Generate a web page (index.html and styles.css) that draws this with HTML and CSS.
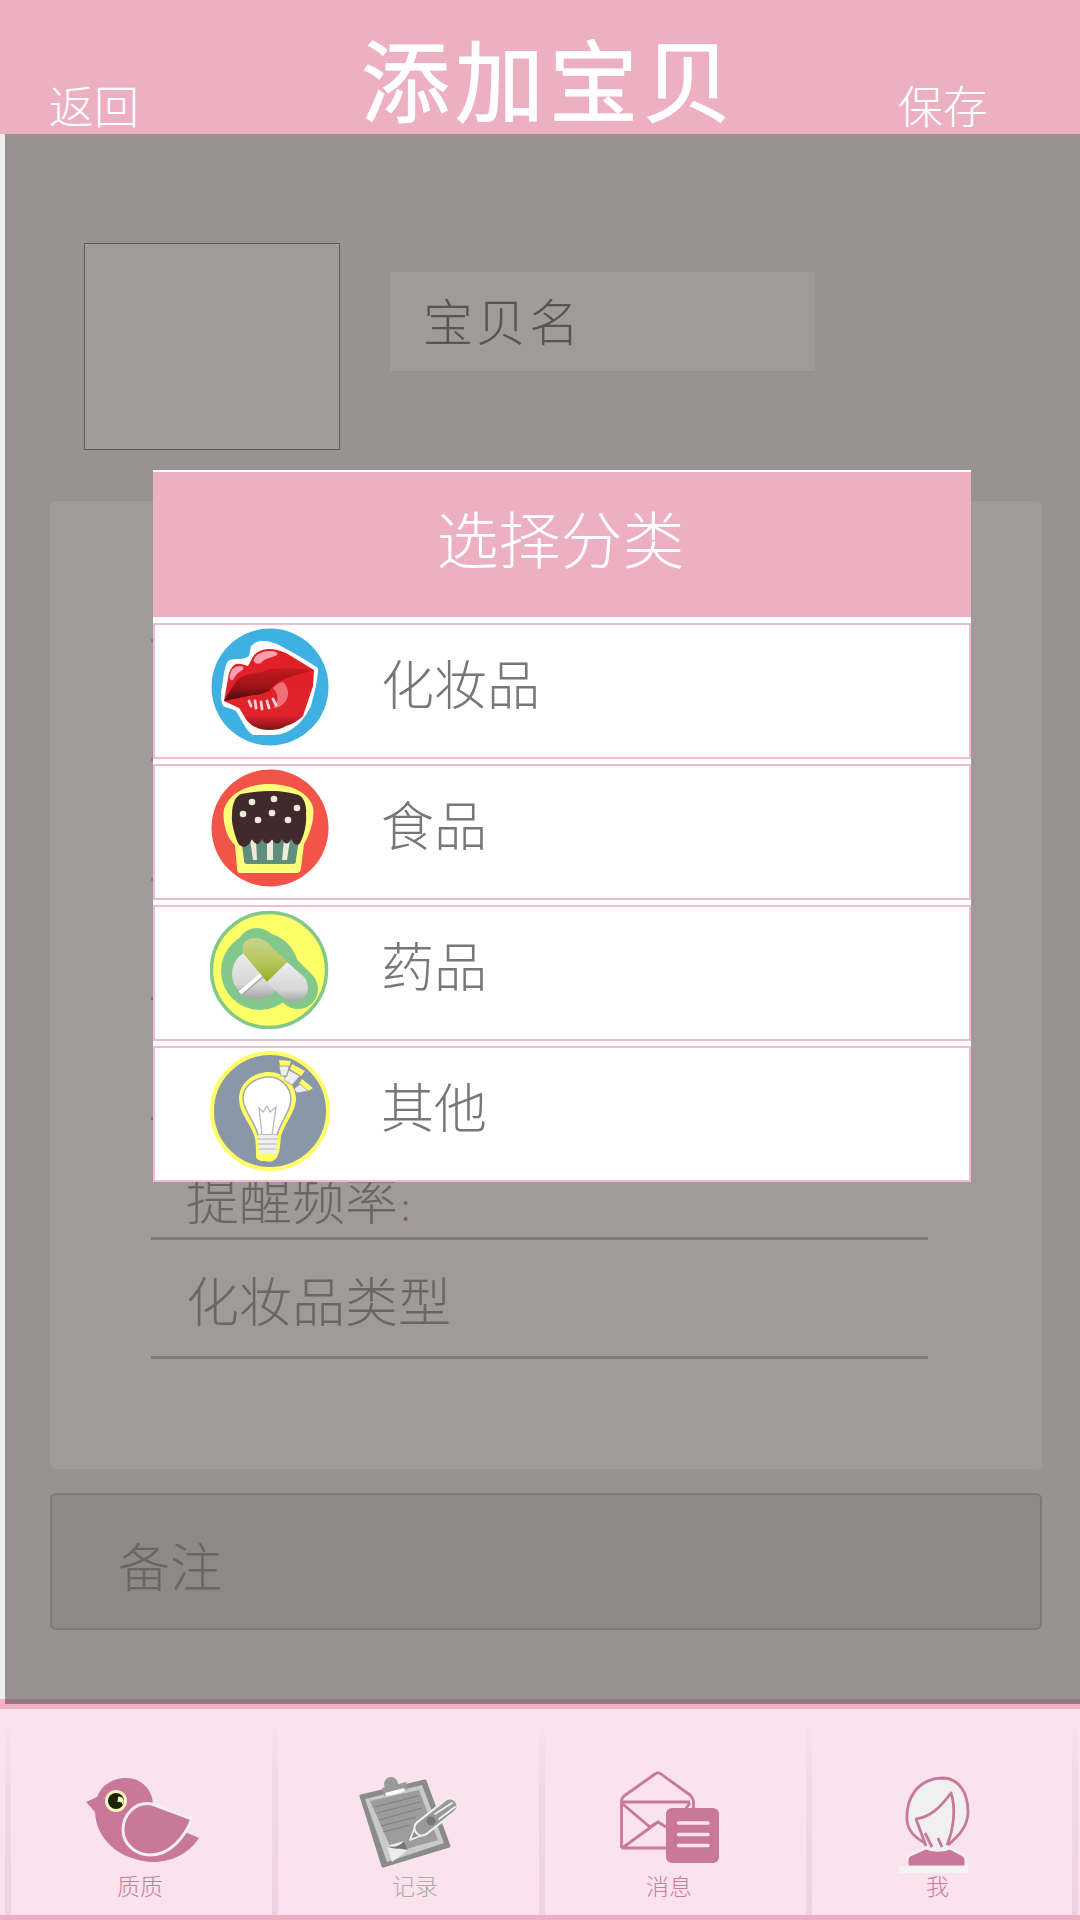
FILE: index.html
```html
<!DOCTYPE html>
<html lang="zh">
<head>
<meta charset="utf-8">
<title>添加宝贝</title>
<link rel="stylesheet" href="styles.css">
</head>
<body>
<div class="page">
  <header class="header">
    <span class="nav-back">返回</span>
    <h1 class="title">添加宝贝</h1>
    <span class="nav-save">保存</span>
  </header>

  <main class="main">
    <section class="top-row">
      <div class="photo"></div>
      <div class="name-field">宝贝名</div>
    </section>
    <section class="form-card">
      <div class="form-row"></div>
      <div class="form-row"></div>
      <div class="form-row"></div>
      <div class="form-row"></div>
      <div class="form-row"></div>
      <div class="form-row form-row-low"><span>提醒频率<span class="colon">：</span></span></div>
      <div class="form-row">化妆品类型</div>
    </section>
    <section class="note-card">备注</section>
  </main>

  <nav class="tabbar">
    <div class="tabs">
      <div class="tab tab-bird">
        <svg class="tab-icon" width="130" height="105" viewBox="0 0 130 105">
          <path d="M6 32L17 27C22 14 34 8 46 8C62 8 72 20 73 33L105 62L119 68C108 85 90 92 72 92C40 90 16 70 15 42Z" fill="#ca7899"/>
          <path d="M112 49L72 34C55 31 43 45 43 60C43 75 57 85 70 85C90 85 104 68 112 49Z" fill="#ca7899" stroke="#f1eff1" stroke-width="3" stroke-linejoin="round"/>
          <circle cx="36" cy="31" r="11" fill="#f6f6bd"/>
          <circle cx="36" cy="31" r="8" fill="#1e2308"/>
          <path d="M38 27C43 26 45 30 43 35C42 32 40 31 37 32C38 30 38 29 38 27Z" fill="#f6f6bd"/>
        </svg>
        <span class="tab-label tab-label-active">质质</span>
      </div>
      <div class="tab tab-clip">
        <svg class="tab-icon" width="120" height="105" viewBox="0 0 120 105">
          <path d="M11 26L75 11L99 76L33 96Z" fill="#8b8b8b" stroke="#8b8b8b" stroke-width="3" stroke-linejoin="round"/>
          <path d="M15 29L72 15L94 73L37 92Z" fill="#c9c9c9"/>
          <path d="M20 31L69 20L88 70L56 79L40 76Z" fill="#9c9c9c"/>
          <path d="M37 76L54 71L58 80L42 92Z" fill="#ededed"/>
          <path d="M37 76C44 78 50 76 54 71L58 80C50 78 43 80 37 76Z" fill="#777"/>
          <circle cx="41" cy="14" r="7" fill="#9a9a9a"/>
          <path d="M32 18L56 12L58 19L34 26Z" fill="#9a9a9a"/>
          <path d="M35 23L54 18L55 21C48 24 42 25 36 26Z" fill="#fff"/>
          <path d="M25 37L68 26M27 43L70 32M29 50L72 38M31 56L66 47M33 62L60 55" stroke="#7e7e7e" stroke-width="1" fill="none"/>
          <path d="M60 70L65 57L75 64Z" fill="#8b8b8b" stroke="#efefef" stroke-width="1.800" stroke-linejoin="round"/>
          <path d="M72 58L100 36" stroke="#efefef" stroke-width="17" stroke-linecap="round"/>
          <path d="M72 58L100 36" stroke="#999" stroke-width="13" stroke-linecap="round"/>
          <path d="M85 44L102 33M89 49L105 37" stroke="#efefef" stroke-width="1.800" stroke-linecap="round"/>
          <circle cx="81" cy="51" r="4.500" fill="#777"/>
        </svg>
        <span class="tab-label tab-label-muted">记录</span>
      </div>
      <div class="tab tab-mail">
        <svg class="tab-icon" width="120" height="105" viewBox="0 5 120 105">
          <path d="M11.500 83V35C12 33 13 32 14 31L45 9C47 7.500 49 7.500 51 9L80 30C82 32 83 33.500 83.500 36V46" fill="none" stroke="#ca7899" stroke-width="2.800" stroke-linejoin="round"/>
          <path d="M11.500 37H80M12 38.500L40 62L48 57L56 62M11.500 83.500L48 57M11.500 83H60M71 50L80 38" fill="none" stroke="#ca7899" stroke-width="2.800"/>
          <rect x="56" y="43" width="53" height="55" rx="6" fill="#ca7899"/>
          <path d="M68.500 58H98M68.500 69.500H98M68.500 80.500H98" stroke="#fae3ec" stroke-width="3.500" stroke-linecap="round"/>
        </svg>
        <span class="tab-label tab-label-active">消息</span>
      </div>
      <div class="tab tab-me">
        <svg class="tab-icon" width="110" height="105" viewBox="0 0 110 105">
          <path d="M46 74C36 68 28 62 27 50C26 30 36 9 62 8C80 8 88 24 88 42C88 58 76 68 68 76L60 80L52 80Z" fill="#f0f0f0"/>
          <path d="M45 73C36 68 28 62 27 50C26 30 36 9 62 8C80 8 88 24 88 42C88 58 76 68 68 75" fill="none" stroke="#ca7899" stroke-width="2.800"/>
          <path d="M46 76L36 49C50 47 60 38 71 23C76 38 74 58 67 75M45 63L52 77M58 68L62 77" fill="none" stroke="#ca7899" stroke-width="2.800" stroke-linejoin="round"/>
          <path d="M27 90C27 87 28 86 30 85L46 78C52 81 62 81 70 78L83 85C85 86 86 88 86 90V97H27Z" fill="#ca7899" stroke="#f1f0f1" stroke-width="3"/>
          <rect x="19" y="96" width="69" height="7" fill="#f3f3f3"/>
        </svg>
        <span class="tab-label tab-label-active">我</span>
      </div>
    </div>
  </nav>

  <div class="overlay">
    <div class="modal">
      <div class="modal-head">选择分类</div>
      <ul class="cat-list">
        <li class="cat-row">
          <svg class="cat-icon" width="120" height="120" viewBox="-1 -1 120 120">
            <defs>
              <linearGradient id="lipA" x1="0" y1="0" x2="0" y2="1"><stop offset="0" stop-color="#c41a1f"/><stop offset=".6" stop-color="#9a1216"/><stop offset="1" stop-color="#3e0a0c"/></linearGradient>
              <linearGradient id="lipB" x1="0" y1="0" x2="0" y2="1"><stop offset="0" stop-color="#e21f27"/><stop offset=".82" stop-color="#e0232c"/><stop offset="1" stop-color="#7b1216"/></linearGradient>
            </defs>
            <circle cx="59" cy="59" r="58.500" fill="#3fb0e2"/>
            <path d="M40 18C44 14 48 13 52 13C58 13 63 15 68 17L88 28L107 40C107 46 106 52 105 58L100 78C95 88 90 94 85 98C78 104 70 107 62 107L42 107C37 104 35 100 32 95L25 83C20 80 16 80 12 78C10 74 10 70 10 65L13 45C14 40 15 36 17 33C20 31 24 31 28 31C32 31 35 30 38 28Z" fill="#fff"/>
            <path d="M43 27C47 23 52 21 58 21C64 21 70 23 75 25L103 42L102 58L92 88C88 92 82 96 75 98C70 101 64 102 58 102C52 102 47 101 42 98C38 95 35 92 33 88C31 85 30 82 28 80L13 73L18 45C20 40 22 37 25 36C29 35 33 37 37 38Z" fill="url(#lipB)"/>
            <path d="M13 73C20 62 24 52 32 48C40 44 50 46 58 41C70 40 90 40 103 42C90 46 80 48 72 52C66 54 62 58 58 63C52 66 46 67 42 67Z" fill="url(#lipA)"/>
            <path d="M62 60C66 56 70 54 72 54C78 60 79 68 74 74C70 79 66 80 62 80C68 74 68 66 62 60Z" fill="#ee6f77"/>
            <path d="M38 73L40 78M44 73L45 80M50 74L51 81M56 73L58 80M62 71L65 77" stroke="#fff" stroke-width="2.800" stroke-linecap="round" opacity=".8"/>
            <path d="M19 47C20 41 24 38 29 38C33 38 34 41 30 43C26 45 24 48 22 52C19 53 18 50 19 47Z" fill="#f9a0b0"/>
            <path d="M43 31C45 26 52 23 59 23C66 23 69 26 64 28C58 30 53 31 50 35C46 37 42 35 43 31Z" fill="#f9a0b0"/>
          </svg>
          <span class="cat-name">化妆品</span>
        </li>
        <li class="cat-row">
          <svg class="cat-icon" width="120" height="120" viewBox="-1 0 120 120">
            <circle cx="59" cy="60" r="58.500" fill="#f2544a"/>
            <path d="M29 105C27 105 26 103 26 100L24 77C15 70 11 52 13 41C18 26 35 16 58 16C80 16 98 25 102 39C104 52 98 68 93 76L90 100C90 103 88 105 86 105Z" fill="#ffff7a"/>
            <path d="M30 70H88L85 92C85 95 84 96 82 96H36C34 96 33 95 33 92Z" fill="#5f8e7c"/>
            <path d="M39 72L42 92H46L45 72ZM56 72V92H62V72ZM73 72L71 92H76L79 72Z" fill="#f1e9da"/>
            <path d="M27 75C24 68 20 55 21 47C21 35 25 28 30 26C40 24 50 23 60 23C72 23 80 25 88 27C93 30 96 38 95 46C96 56 93 68 89 75C86 79 83 76 80 71C77 77 74 77 71 71C68 77 64 77 61 71C58 77 54 77 51 71C48 78 44 77 41 71C37 80 31 81 27 75Z" fill="#42292e"/>
            <circle cx="41" cy="34" r="3.300" fill="#f1e9da"/><circle cx="63" cy="31" r="3.300" fill="#f1e9da"/><circle cx="86" cy="40" r="3.300" fill="#f1e9da"/><circle cx="32" cy="46" r="3.300" fill="#f1e9da"/><circle cx="61" cy="45" r="3.300" fill="#f1e9da"/><circle cx="47" cy="52" r="3.300" fill="#f1e9da"/><circle cx="77" cy="52" r="3.300" fill="#f1e9da"/>
          </svg>
          <span class="cat-name">食品</span>
        </li>
        <li class="cat-row">
          <svg class="cat-icon" width="120" height="120" viewBox="0 -2 120 120">
            <defs>
              <linearGradient id="pillG" x1="0" y1="0" x2="0" y2="1"><stop offset="0" stop-color="#c8d48c"/><stop offset=".5" stop-color="#b9c860"/><stop offset="1" stop-color="#95ac22"/></linearGradient>
              <linearGradient id="pillW" x1="0" y1="0" x2="0" y2="1"><stop offset="0" stop-color="#eee"/><stop offset=".7" stop-color="#d6d6d6"/><stop offset="1" stop-color="#a5a5a5"/></linearGradient>
            </defs>
            <circle cx="59" cy="59" r="57.500" fill="#ffff66" stroke="#82c88c" stroke-width="3.500"/>
            <circle cx="50" cy="60" r="39" fill="#82c88c"/>
            <path d="M47 37L88 78" stroke="#82c88c" stroke-width="40" stroke-linecap="round"/>
            <circle cx="47" cy="63" r="25" fill="url(#pillW)"/>
            <path d="M30 82L72 46" stroke="#fff" stroke-width="4"/>
            <path d="M31 85L73 48" stroke="#aaa" stroke-width="1.500"/>
            <path d="M57 71L77 51L93 65C102 74 98 88 88 90C80 92 76 90 72 86Z" fill="url(#pillW)"/>
            <path d="M33 42C30 32 38 26 45 27C50 27 55 29 58 32L77 51L57 71Z" fill="url(#pillG)"/>
          </svg>
          <span class="cat-name">药品</span>
        </li>
        <li class="cat-row">
          <svg class="cat-icon" width="122" height="122" viewBox="0 -1 122 122">
            <circle cx="60" cy="60" r="58" fill="#8997a9" stroke="#ffff66" stroke-width="4"/>
            <path d="M57 21C73 20 86 33 86 48C86 60 76 70 71 85C70 95 70 100 68 104C66 110 60 112 55 110C48 110 46 108 46 104C46 95 46 90 44 84C40 72 29 62 29 47C29 33 42 22 57 21Z" fill="#ffff66"/>
            <path d="M57 26C70 25 81 36 81 48C81 60 71 70 67 84H48C45 70 33 60 33 47C33 36 44 27 57 26Z" fill="#fff" stroke="#a9a9a9" stroke-width="1.500"/>
            <path d="M48 84H67L66 103H50Z" fill="#efefef"/>
            <path d="M47 88H68M48 93H67M49 98H66" stroke="#b5b5b5" stroke-width="1.200"/>
            <path d="M52 84L49 57L53 61L57 55L60 61L66 56L62 84" fill="none" stroke="#bbb" stroke-width="1.300"/>
            <path d="M69 9L81 10L79 16L70 15ZM82 13L95 20L91 25L80 18ZM92 28L103 37L98 40L89 33Z" fill="#ffff66"/>
            <path d="M69 15H79L77 25H71ZM79 19L90 25L82 34L74 29ZM90 33L98 40L87 42L84 38Z" fill="#efefef" stroke="#999" stroke-width=".800"/>
          </svg>
          <span class="cat-name">其他</span>
        </li>
      </ul>
    </div>
  </div>
</div>
</body>
</html>
```
FILE: styles.css
```css
* { box-sizing: border-box; }
html, body { margin: 0; padding: 0; }
body { font-family: "Noto Sans CJK SC", "Noto Sans", sans-serif; font-weight: 300; }

.page {
  position: relative;
  width: 1080px;
  height: 1920px;
  display: flex;
  flex-direction: column;
  overflow: hidden;
  background: #eee;
}

.header {
  height: 134px;
  flex: none;
  background: #edb0c3;
  color: #fff;
  display: flex;
  align-items: flex-end;
  padding-left: 49px;
}
.nav-back, .nav-save { font-size: 45px; line-height: 52px; margin-bottom: 3px; }
.title {
  margin: 0 0 7px 222px;
  font-size: 89px;
  line-height: 100px;
  font-weight: 400;
  letter-spacing: 5px;
  -webkit-text-stroke: 1px #fff;
}
.nav-save { margin-left: 161px; }

.main {
  flex: 1;
  padding: 109px 38px 0 50px;
  background: #eee;
}
.top-row { display: flex; padding-left: 34px; align-items: flex-start; }
.photo { width: 256px; height: 207px; background: #fff; border: 1px solid #757575; }
.name-field {
  width: 425px;
  height: 99px;
  margin: 29px 0 0 50px;
  padding: 0 0 5px 33px;
  background: #fff;
  color: #6a6a6a;
  font-size: 50px;
  letter-spacing: 3px;
  display: flex;
  align-items: center;
}
.form-card {
  height: 968px;
  margin-top: 51px;
  padding-top: 21px;
  background: #fff;
  border-radius: 6px;
}
.form-row {
  height: 119.600px;
  margin: 0 114px 0 101px;
  padding: 2px 0 0 35px;
  border-bottom: 3px solid #b9b9b9;
  color: #8f8f8f;
  font-size: 53px;
  display: flex;
  align-items: center;
}
.form-row-low { align-items: flex-end; padding-bottom: 2px; }
.colon { font-family: "Noto Sans CJK TC", sans-serif; font-size: 30px; }
.note-card {
  height: 137px;
  margin-top: 24px;
  padding: 6px 0 0 66px;
  background: #d8d8d8;
  border: 2px solid #b9b9b9;
  border-radius: 6px;
  color: #8f8f8f;
  font-size: 52px;
  display: flex;
  align-items: center;
}

.tabbar {
  height: 221px;
  flex: none;
  border-top: 10px solid #f1b1c6;
  border-bottom: 5px solid #edb0c3;
  background: #fae3ec;
  padding: 9px 0 0 5px;
}
.tabs { display: grid; grid-template-columns: 267px 267px 267px 272px; height: 100%; }
.tab {
  border-left: 6px solid;
  border-image: linear-gradient(to bottom, #fae3ec, #f2d8e6 35%, #efd2e2) 1;
  display: flex;
  flex-direction: column;
  align-items: flex-start;
  padding-top: 52px;
}
.tab-me { border-right: 6px solid; }
.tab-icon { display: block; }
.tab-label { font-size: 23px; line-height: 21px; font-weight: 300; }
.tab-label-active { color: #cc7a9c; }
.tab-label-muted { color: #aaa; }
.tab-bird .tab-icon { margin-left: 69px; }
.tab-bird .tab-label { margin-left: 106px; }
.tab-clip .tab-icon { margin-left: 72px; }
.tab-clip .tab-label { margin-left: 114px; }
.tab-mail .tab-icon { margin-left: 65px; }
.tab-mail .tab-label { margin-left: 101px; }
.tab-me .tab-icon { margin-left: 68px; }
.tab-me .tab-label { margin-left: 114px; }

.overlay {
  position: absolute;
  left: 5px;
  right: 0;
  top: 134px;
  bottom: 216px;
  background: rgba(75, 66, 64, .53);
}
.modal {
  position: absolute;
  left: 148px;
  top: 336px;
  width: 818px;
  background: #fff;
  border-top: 2px solid #fff;
}
.modal-head {
  height: 145px;
  padding: 0 3px 15px 0;
  background: #edb0c3;
  color: #fff;
  font-size: 62px;
  display: flex;
  align-items: center;
  justify-content: center;
}
.cat-list { list-style: none; margin: 6px 0 0; padding: 0; display: flex; flex-direction: column; gap: 5px; }
.cat-row {
  height: 136px;
  border: 2px solid #f0bdd0;
  padding: 2px 0 0 55px;
  display: flex;
  align-items: flex-start;
}
.cat-icon { flex: none; }
.cat-name {
  width: 300px;
  margin-left: 51px;
  color: #777;
  font-size: 53px;
  line-height: 110px;
}
.cat-row:last-child .cat-name { margin-left: 49px; }
```
